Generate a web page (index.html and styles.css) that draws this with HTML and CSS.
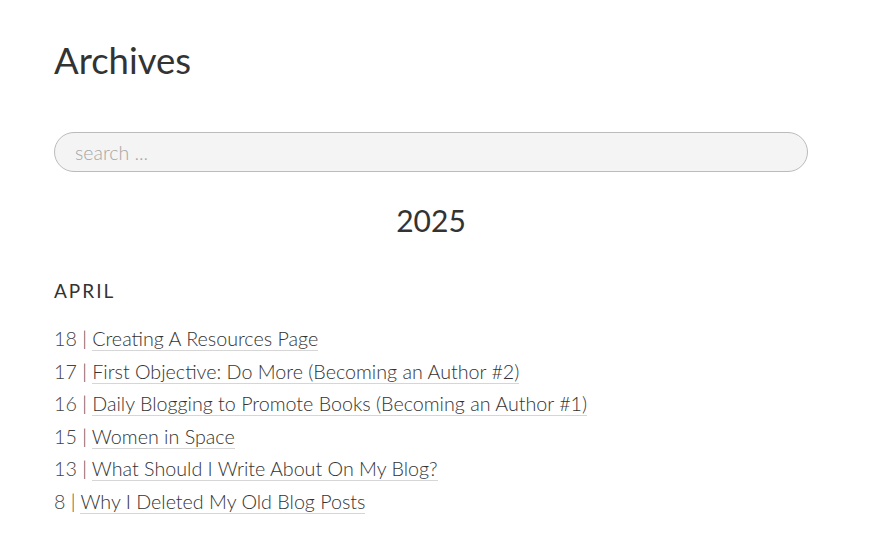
FILE: index.html
```html
<!DOCTYPE html>
<html lang="en">
<head>
  <meta charset="UTF-8">
  <meta name="viewport" content="width=device-width, initial-scale=1.0">
  <title>Archives</title>
  <link rel="stylesheet" href="styles.css">
</head>
<body>
  <main class="page">
    <h1 class="page-title">Archives</h1>

    <form class="search-form">
      <input type="search" class="search-field" placeholder="search ...">
    </form>

    <section class="archive-year">
      <h2 class="year-title">2025</h2>

      <h3 class="month-title">April</h3>
      <ul class="post-list">
        <li><span class="day">18 |</span> <a href="#">Creating A Resources Page</a></li>
        <li><span class="day">17 |</span> <a href="#">First Objective: Do More (Becoming an Author #2)</a></li>
        <li><span class="day">16 |</span> <a href="#">Daily Blogging to Promote Books (Becoming an Author #1)</a></li>
        <li><span class="day">15 |</span> <a href="#">Women in Space</a></li>
        <li><span class="day">13 |</span> <a href="#">What Should I Write About On My Blog?</a></li>
        <li><span class="day">8 |</span> <a href="#">Why I Deleted My Old Blog Posts</a></li>
      </ul>
    </section>
  </main>
</body>
</html>
```

FILE: styles.css
```css
body {
  font-family: Lato, 'Open Sans', sans-serif;
  background: #ffffff;
  color: #333333;
  margin: 0;
}

.page {
  width: 754px;
  padding: 38px 54px;
}

.page-title {
  font-size: 36.5px;
  font-weight: 400;
  line-height: 44px;
  margin: 0 0 50px;
}

.search-form {
  margin: 0;
}

.search-field {
  box-sizing: border-box;
  width: 100%;
  height: 40px;
  padding: 0 20px;
  border: 1px solid #bbbbbb;
  border-radius: 20px;
  background: #f4f4f4;
  font-family: inherit;
  font-size: 19.5px;
  font-weight: 300;
  color: #333333;
  outline: none;
}

.search-field::placeholder {
  color: #a6a6a6;
}

.year-title {
  text-align: center;
  font-size: 30px;
  font-weight: 400;
  line-height: 40px;
  margin: 28px 0 39px;
}

.month-title {
  font-size: 19px;
  font-weight: 400;
  text-transform: uppercase;
  letter-spacing: 2px;
  line-height: 24px;
  margin: 0 0 20px;
}

.post-list {
  list-style: none;
  margin: 0;
  padding: 0;
  font-size: 19.7px;
  font-weight: 300;
  line-height: 32.6px;
}

.day {
  color: #444444;
}

.post-list a {
  color: #333333;
  text-decoration: none;
  border-bottom: 1px solid #d6d6d6;
}
```
